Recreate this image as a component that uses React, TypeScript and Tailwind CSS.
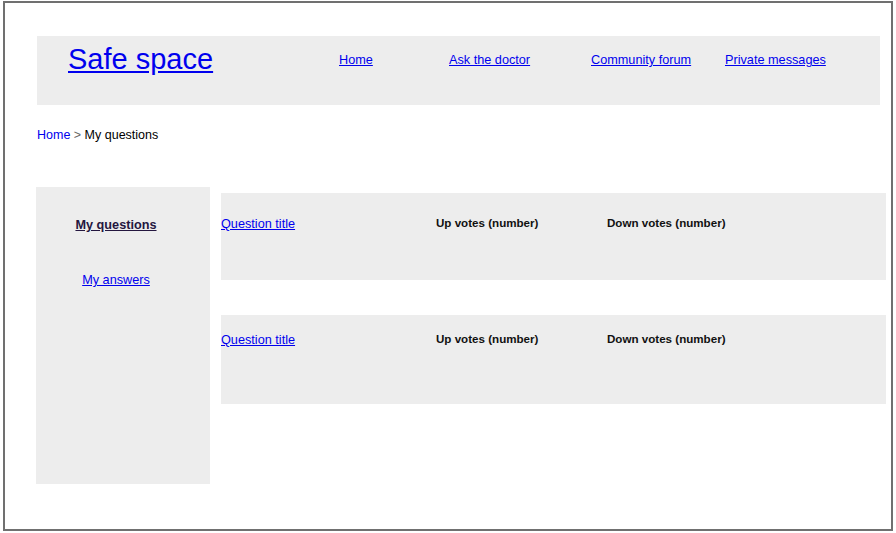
const link = "text-[#0000ee] underline";

function QuestionRow({ top }: { top: string }) {
  return (
    <div className={`flex items-start bg-[#ededed] ${top}`}>
      <div className="w-[215px] pt-[1px] text-[12.7px] leading-[15px]">
        <a href="#" className={link}>
          Question title
        </a>
      </div>
      <div className="w-[171px] text-[11.6px] font-bold leading-[14px] text-[#111]">Up votes (number)</div>
      <div className="text-[11.6px] font-bold leading-[14px] text-[#111]">Down votes (number)</div>
    </div>
  );
}

export default function App() {
  return (
    <div className="min-h-screen bg-white font-['Liberation_Sans',Arial,sans-serif]">
      <div className="ml-[3px] mt-[1px] h-[530px] w-[890px] border-2 border-[#707070] bg-white">
        <header className="ml-[32px] mt-[33px] flex h-[69px] w-[843px] items-start bg-[#ededed]">
          <div className="ml-[31px] mt-[7px] w-[271px]">
            <a href="#" className={`${link} text-[29px] leading-[33px]`}>
              Safe space
            </a>
          </div>
          <nav className="mt-[17px] flex text-[12.7px] leading-[15px]">
            <div className="w-[110px]">
              <a href="#" className={link}>Home</a>
            </div>
            <div className="w-[142px]">
              <a href="#" className={link}>Ask the doctor</a>
            </div>
            <div className="w-[134px]">
              <a href="#" className={link}>Community forum</a>
            </div>
            <div>
              <a href="#" className={link}>Private messages</a>
            </div>
          </nav>
        </header>

        <div className="ml-[32px] mt-[23px] text-[12.5px] leading-[15px]">
          <a href="#" className="text-[#0000ee]">Home</a>
          <span className="text-[#666]"> &gt; </span>
          <span className="text-black">My questions</span>
        </div>

        <div className="ml-[31px] mt-[44px] flex items-start gap-[11px]">
          <aside className="flex h-[297px] w-[174px] flex-col items-center bg-[#ededed] pr-[14px] pt-[31px] text-[12.7px] leading-[15px]">
            <a href="#" className="font-bold text-[#24163f] underline">
              My questions
            </a>
            <a href="#" className={`${link} mt-[40px]`}>
              My answers
            </a>
          </aside>

          <div className="mt-[6px] flex w-[665px] flex-col gap-[35px]">
            <QuestionRow top="h-[87px] pt-[23px]" />
            <QuestionRow top="h-[89px] pt-[17px]" />
          </div>
        </div>
      </div>
    </div>
  );
}
